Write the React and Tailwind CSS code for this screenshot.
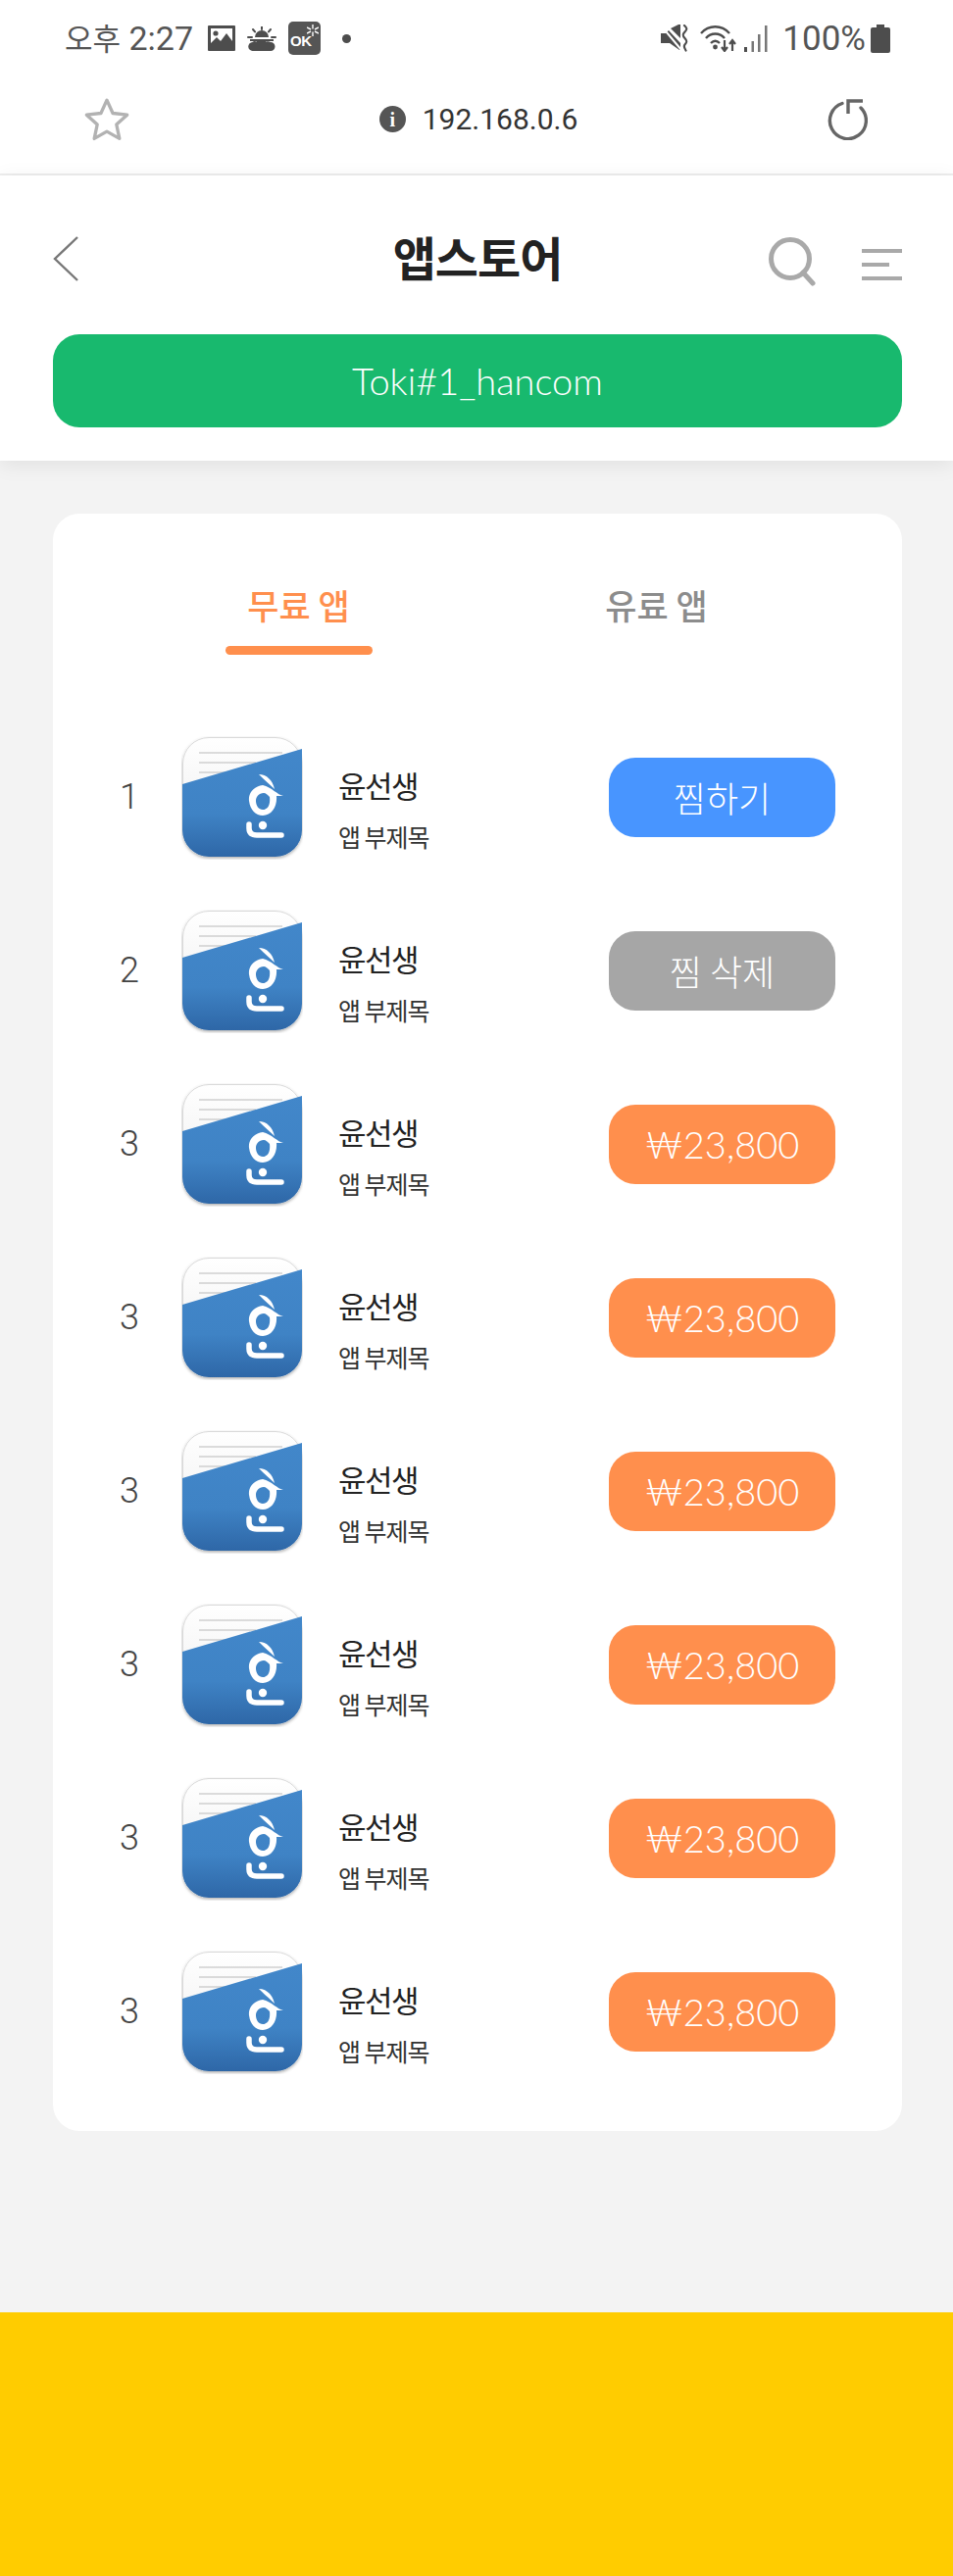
import React from "react";

const KR = { fontFamily: '"Noto Sans CJK KR", "Noto Sans", sans-serif' };

function ImageIcon() {
  return (
    <svg width="28" height="26" viewBox="0 0 28 26" className="shrink-0">
      <path fillRule="evenodd" fill="#4d4d4d" d="M1 0h26a1 1 0 0 1 1 1v24a1 1 0 0 1-1 1H1a1 1 0 0 1-1-1V1a1 1 0 0 1 1-1zM3 3v15l6-6 4 4 6-8 6 8V3z" />
      <circle cx="8" cy="8" r="2.6" fill="#4d4d4d" />
    </svg>
  );
}

function SunCloud() {
  return (
    <svg width="30" height="25" viewBox="0 0 30 25" className="shrink-0">
      <path d="M8 11a7 7 0 0 1 14 0z" fill="#4d4d4d" />
      <path d="M15 0v3M6 3l2 2.400M24 3l-2 2.400M1 11h4M25 11h4" stroke="#4d4d4d" strokeWidth="2" strokeLinecap="round" />
      <path d="M3 14h24" stroke="#4d4d4d" strokeWidth="2" />
      <path d="M6 25a4.500 4.500 0 0 1-.5-9c1.500-1.500 3-1 4-.5 2-2 8-2 10 0 1.500-.5 3-.5 4.500.5a4.500 4.500 0 0 1 0 9z" fill="#4d4d4d" />
    </svg>
  );
}

function OkBadge() {
  return (
    <div className="relative flex h-[34px] w-[33px] shrink-0 items-center rounded-[5px] bg-[#555555] pl-[2px] pt-[5px]" style={{ fontFamily: '"Liberation Sans", sans-serif' }}>
      <span className="text-[15px] font-bold leading-none tracking-[-0.5px] text-white">OK</span>
      <svg width="12" height="12" viewBox="0 0 12 12" className="absolute right-[2px] top-[3px]">
        <path d="M6 0v4.500M6 7.500V12M0 3l4 2M8 7l4 2M12 3L8 5M4 7L0 9" stroke="#fff" strokeWidth="1.400" />
      </svg>
    </div>
  );
}

function MuteVibrate() {
  return (
    <svg width="30" height="28" viewBox="0 0 30 28" className="shrink-0">
      <path d="M0 9h5l3-3 12 13v7h-1L9 19H5l-5 0z" fill="#4d4d4d" />
      <path d="M10 4l8-4h2v14z" fill="#4d4d4d" />
      <path d="M0 1l21 25" stroke="#fff" strokeWidth="2" />
      <path d="M24 1c3 2.500 3 4 .5 6.500s-2.500 4 0 6.500 2.500 4 0 6.500c-1 1.200-1 3 1 6" fill="none" stroke="#4d4d4d" strokeWidth="2.200" strokeLinecap="round" />
    </svg>
  );
}

function Wifi() {
  return (
    <svg width="38" height="28" viewBox="0 0 38 28" className="shrink-0">
      <g fill="none" stroke="#4d4d4d" strokeWidth="2.400">
        <path d="M1 9c8-9 21-9 29 0" />
        <path d="M6 14c5-6 14-6 19 0" />
        <path d="M11 19c3-3 6-3 9 0" />
      </g>
      <circle cx="15.500" cy="23" r="2.400" fill="#4d4d4d" />
      <path d="M25 16v10M22 23l3 4 3-4M33 27V17M30 20l3-4 3 4" fill="none" stroke="#4d4d4d" strokeWidth="2.200" />
    </svg>
  );
}

function Signal() {
  return (
    <svg width="25" height="27" viewBox="0 0 25 27" className="shrink-0">
      <rect x="0" y="22" width="3" height="5" fill="#4d4d4d" />
      <rect x="7.500" y="16" width="2.500" height="11" fill="#777" />
      <rect x="14" y="9" width="2.500" height="18" fill="#777" />
      <rect x="21" y="0" width="2.500" height="27" fill="#777" />
    </svg>
  );
}

function Battery() {
  return (
    <svg width="20" height="29" viewBox="0 0 20 29" className="shrink-0">
      <path d="M6 0h8v3h4a2 2 0 0 1 2 2v22a2 2 0 0 1-2 2H2a2 2 0 0 1-2-2V5a2 2 0 0 1 2-2h4z" fill="#4d4d4d" />
    </svg>
  );
}

function StatusBar() {
  return (
    <div className="flex h-[80px] items-center justify-between pb-[2px] pl-[66px] pr-[64px] text-[34px] text-[#555555]" style={{ fontFamily: 'Roboto, "Noto Sans CJK KR", sans-serif' }}>
      <div className="flex items-center">
        <span className="whitespace-nowrap leading-none">
          <span className="text-[31px]" style={KR}>오후</span> 2:27
        </span>
        <div className="ml-[15px] flex items-center gap-[12px]">
          <ImageIcon />
          <SunCloud />
          <OkBadge />
          <span className="ml-[10px] h-[9px] w-[9px] rounded-full bg-[#4d4d4d]" />
        </div>
      </div>
      <div className="flex items-center">
        <MuteVibrate />
        <div className="ml-[10px]"><Wifi /></div>
        <div className="ml-[7px]"><Signal /></div>
        <span className="ml-[14px] text-[35px] leading-none">100%</span>
        <div className="ml-[5px]"><Battery /></div>
      </div>
    </div>
  );
}

function UrlBar() {
  return (
    <div className="flex h-[99px] items-center justify-between border-b-2 border-[#eeeeee] pb-[14px] pl-[85px] pr-[87px]">
      <svg width="48" height="46" viewBox="0 0 46 44" className="shrink-0">
        <path d="M23 3l5.800 12.800 14 1.600-10.400 9.400 2.900 13.800L23 33.600 10.700 40.600l2.900-13.800L3.200 17.400l14-1.600z" fill="none" stroke="#b2b2b2" strokeWidth="3.200" strokeLinejoin="round" />
      </svg>
      <div className="flex items-center gap-[17px]">
        <span className="flex h-[27px] w-[27px] items-center justify-center rounded-full bg-[#555555] text-[20px] font-bold leading-none text-white" style={{ fontFamily: '"Liberation Serif", serif' }}>i</span>
        <span className="text-[30px] leading-none text-[#333333]" style={{ fontFamily: "Roboto, sans-serif" }}>192.168.0.6</span>
      </div>
      <svg width="42" height="42" viewBox="0 0 42 42" className="shrink-0">
        <path d="M16 4.500A18.500 18.500 0 1 0 35 9" fill="none" stroke="#666666" strokeWidth="3.400" strokeLinecap="round" />
        <path d="M37 2H22V15" fill="none" stroke="#666666" strokeWidth="3.400" />
      </svg>
    </div>
  );
}

function Header() {
  return (
    <div className="relative bg-white pl-[54px] pr-[52px] shadow-[0_4px_20px_rgba(0,0,0,0.08)]">
      <div className="flex h-[162px] items-center justify-between pt-[2px]">
        <div className="w-[136px]">
          <svg width="26" height="46" viewBox="0 0 26 46" className="mt-[5px]">
            <path d="M25 1L2 23l23 22" fill="none" stroke="#777777" strokeWidth="2.400" />
          </svg>
        </div>
        <h1 className="text-[48px] font-bold leading-none tracking-[-1px] text-[#222222]" style={KR}>앱스토어</h1>
        <div className="flex w-[136px] items-center justify-end gap-[47px]">
          <svg width="48" height="50" viewBox="0 0 48 50" className="mt-[12px] shrink-0">
            <circle cx="22" cy="22" r="19.500" fill="none" stroke="#a9a9a9" strokeWidth="5" />
            <path d="M35 36l10 11" stroke="#a9a9a9" strokeWidth="5" strokeLinecap="round" />
          </svg>
          <div className="mt-[18px] flex w-[41px] shrink-0 flex-col gap-[10px]">
            <span className="h-[4px] w-[41px] bg-[#a9a9a9]" />
            <span className="h-[4px] w-[28px] bg-[#a9a9a9]" />
            <span className="h-[4px] w-[41px] bg-[#a9a9a9]" />
          </div>
        </div>
      </div>
      <div className="flex h-[95px] items-center justify-center rounded-[27px] bg-[#18b96e] text-[38px] font-light text-white" style={{ fontFamily: "Lato, sans-serif" }}>
        Toki#1_hancom
      </div>
      <div className="h-[34px]" />
    </div>
  );
}

function Tabs() {
  return (
    <div className="mb-[85px] flex justify-center pt-[68px]" style={KR}>
      <div className="flex w-[365px] flex-col items-center">
        <span className="text-[35px] font-medium leading-[50px] text-[#ff8f4d]">무료 앱</span>
        <span className="mt-[17px] h-[9px] w-[150px] rounded-full bg-[#ff8f4d]" />
      </div>
      <div className="flex w-[365px] flex-col items-center">
        <span className="text-[35px] font-medium leading-[50px] text-[#8c8c8c]">유료 앱</span>
      </div>
    </div>
  );
}

function AppIcon({ id }) {
  return (
    <svg width="124" height="126" viewBox="0 0 124 126" className="shrink-0">
      <defs>
        <linearGradient id={`b${id}`} x1="0" y1="0" x2="0" y2="1">
          <stop offset="0" stopColor="#4287ca" />
          <stop offset="0.6" stopColor="#3f83c5" />
          <stop offset="1" stopColor="#2e67a7" />
        </linearGradient>
        <linearGradient id={`p${id}`} x1="0" y1="0" x2="0" y2="1">
          <stop offset="0" stopColor="#ffffff" />
          <stop offset="1" stopColor="#ececec" />
        </linearGradient>
        <filter id={`s${id}`} x="-10%" y="-10%" width="120%" height="120%">
          <feDropShadow dx="0" dy="1.500" stdDeviation="1.500" floodColor="#000" floodOpacity="0.32" />
        </filter>
      </defs>
      <g transform="translate(1 1)">
        <rect width="122" height="122" rx="27" fill={`url(#p${id})`} filter={`url(#s${id})`} />
        <rect x="0.500" y="0.500" width="121" height="121" rx="26.500" fill="none" stroke="#d9d9d9" />
        <path d="M17 16h85M17 26h58M17 36h28" stroke="#cfcfcf" strokeWidth="1.600" />
        <path d="M0 48L122 12v83a27 27 0 0 1-27 27H27a27 27 0 0 1-27-27z" fill={`url(#b${id})`} />
        <path d="M78 38c8 0 14 6 16 15-5-5-10-9-16-15z" fill="#ffffff" />
        <path d="M82 49c-9 1-15 8-14 16 1 9 7 15 14 15 9 0 15-9 14-20l7 0c-6-1-12-9-21-11zM83 57c-5 0-8 4-8 8 0 5 3 9 7 9 5 0 8-5 7-13-2-2-4-4-6-4z" fill="#ffffff" fillRule="evenodd" />
        <circle cx="82" cy="90" r="4.200" fill="#ffffff" />
        <path d="M68 89v4c0 5 3 7 8 7h25" fill="none" stroke="#ffffff" strokeWidth="5.500" strokeLinecap="round" />
      </g>
    </svg>
  );
}

function ActionBtn({ label, bg, latin }) {
  return (
    <div
      className={`ml-auto flex h-[81px] w-[231px] shrink-0 -translate-y-px items-center justify-center rounded-[27px] text-white ${bg} ${latin ? "text-[38px] font-light" : "text-[36px] font-light"}`}
      style={latin ? { fontFamily: 'Lato, "Noto Sans CJK KR", sans-serif' } : KR}
    >
      {label}
    </div>
  );
}

const rows = [
  { rank: 1, label: "찜하기", bg: "bg-[#4895ff]" },
  { rank: 2, label: "찜 삭제", bg: "bg-[#a6a6a6]" },
  { rank: 3, label: "₩23,800", bg: "bg-[#ff8f4d]", latin: true },
  { rank: 3, label: "₩23,800", bg: "bg-[#ff8f4d]", latin: true },
  { rank: 3, label: "₩23,800", bg: "bg-[#ff8f4d]", latin: true },
  { rank: 3, label: "₩23,800", bg: "bg-[#ff8f4d]", latin: true },
  { rank: 3, label: "₩23,800", bg: "bg-[#ff8f4d]", latin: true },
  { rank: 3, label: "₩23,800", bg: "bg-[#ff8f4d]", latin: true },
];

function Row({ row, i }) {
  return (
    <div className="flex h-[122px] items-center pl-[48px] pr-[68px]">
      <span className="w-[60px] shrink-0 -translate-y-px text-center text-[36px] font-light leading-none text-[#444444]" style={{ fontFamily: "Roboto, sans-serif" }}>{row.rank}</span>
      <div className="ml-[23px] mr-[36px] flex items-center"><AppIcon id={i} /></div>
      <div className="mt-[22px] flex flex-col" style={KR}>
        <span className="text-[31px] font-normal leading-[40px] tracking-[-1.5px] text-[#222222]">윤선생</span>
        <span className="mt-[16px] text-[25px] leading-[32px] tracking-[-1px] text-[#333333]">앱 부제목</span>
      </div>
      <ActionBtn {...row} />
    </div>
  );
}

export default function App() {
  return (
    <div className="min-h-[2628px] bg-[#f3f3f3]">
      <div className="bg-white">
        <StatusBar />
        <UrlBar />
      </div>
      <Header />
      <main className="pb-[185px] pl-[54px] pr-[52px] pt-[54px]">
        <div className="rounded-[27px] bg-white pb-[60px]">
          <Tabs />
          <div className="flex flex-col gap-[55px]">
            {rows.map((r, i) => <Row key={i} row={r} i={i} />)}
          </div>
        </div>
      </main>
      <div className="h-[269px] bg-[#ffcc00]" />
    </div>
  );
}
